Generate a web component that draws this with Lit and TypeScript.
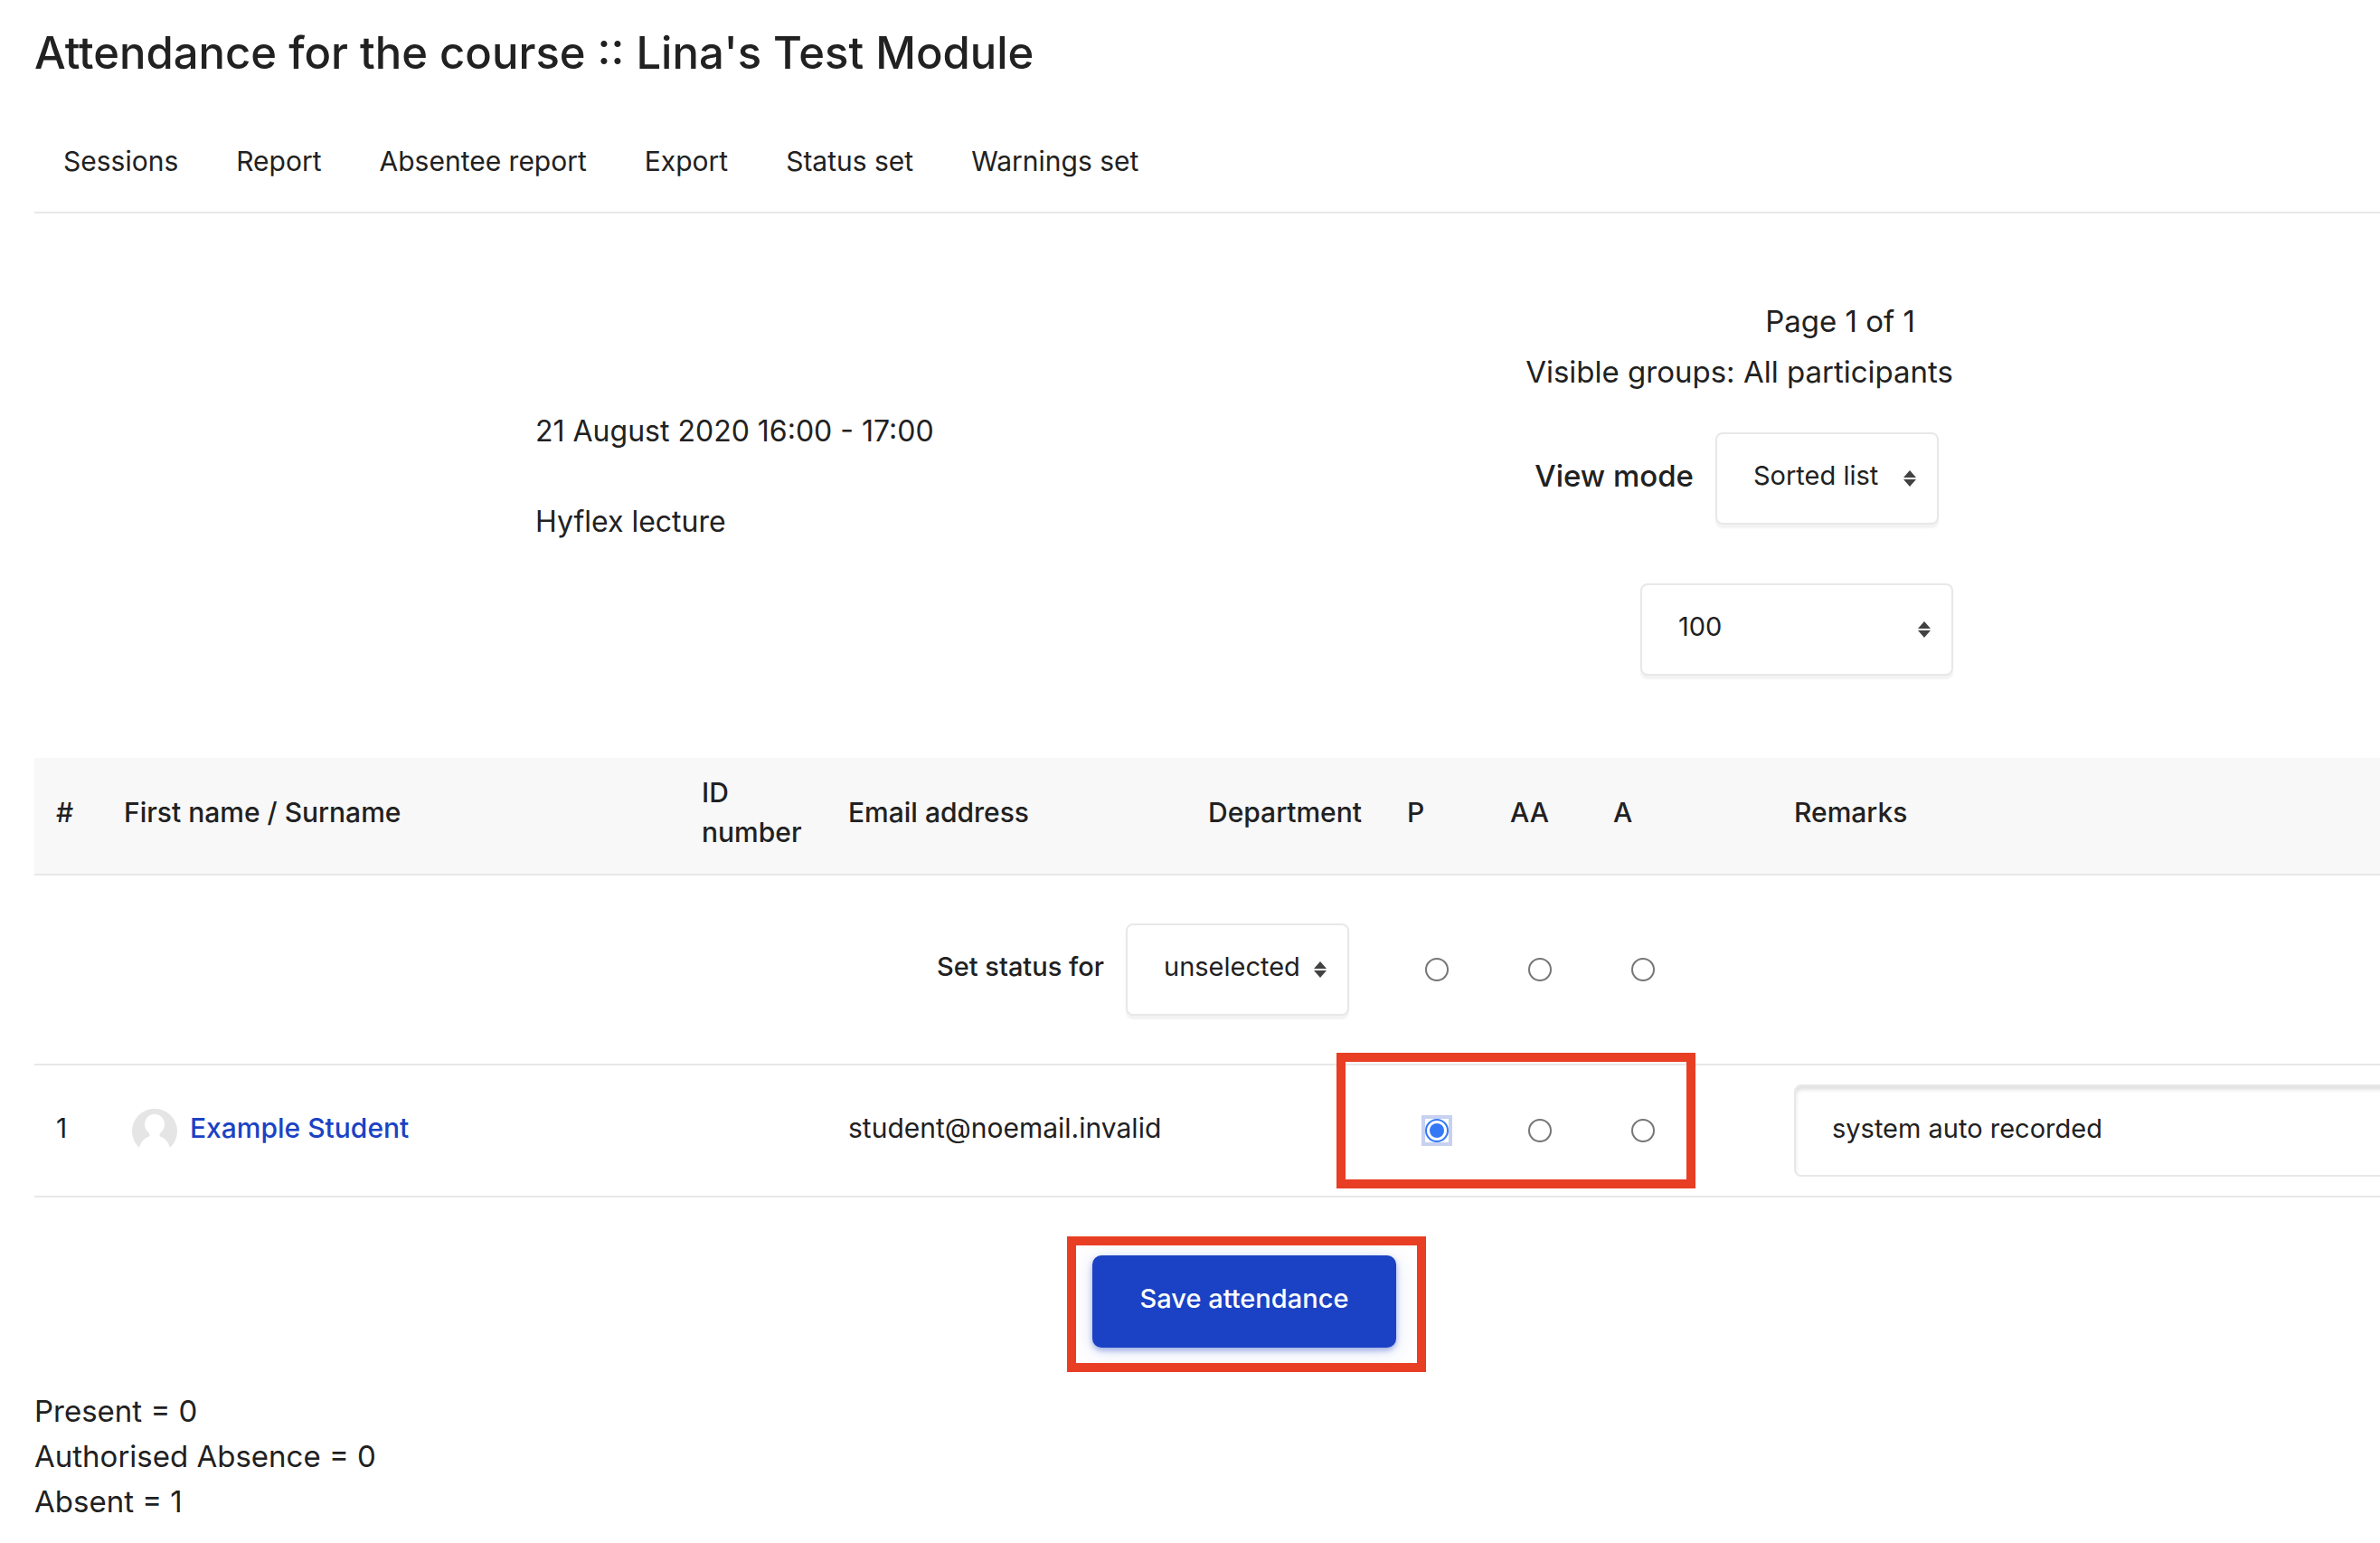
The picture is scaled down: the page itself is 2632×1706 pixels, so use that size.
import { LitElement, html, css, svg } from "lit";
import { customElement, state } from "lit/decorators.js";

const TABS = ["Sessions", "Report", "Absentee report", "Export", "Status set", "Warnings set"];
const STATUSES = [
  { code: "P", label: "Present", count: 0 },
  { code: "AA", label: "Authorised Absence", count: 0 },
  { code: "A", label: "Absent", count: 1 },
];

const sorter = html`<svg class="sorter" width="14" height="18" viewBox="0 0 14 18" aria-hidden="true">
  ${svg`<path d="M0 8 7 0l7 8z" fill="#424242"></path>
  <path d="M0 10h14l-7 8z" fill="#424242"></path>`}
</svg>`;

@customElement("app-root")
export class AppRoot extends LitElement {
  static styles = css`
    :host {
      display: block;
      overflow: hidden;
      background: #fff;
      color: #212121;
      font-family: Inter, "Open Sans", sans-serif;
      font-size: 33px;
      line-height: 50px;
    }
    * {
      box-sizing: border-box;
    }
    .page {
      margin: 0 -82px 0 38px;
      padding: 30px 0 20px;
    }
    .title {
      margin: 0;
      font-size: 49px;
      font-weight: 500;
      line-height: 58px;
    }
    .tabs {
      display: flex;
      gap: 64px;
      margin: 68px 0 0;
      padding: 0 32px 34px;
      list-style: none;
      border-bottom: 2px solid #e8e8e8;
      font-size: 30px;
      line-height: 44px;
    }
    .tab {
      color: inherit;
      text-decoration: none;
    }
    .overview {
      display: grid;
      grid-template-columns: 554fr 1568fr 554fr;
      padding: 94px 0 91px;
    }
    .overview-body {
      grid-column: 2;
      display: flex;
      justify-content: space-between;
      align-items: center;
    }
    .session {
      display: flex;
      flex-direction: column;
      gap: 50px;
      padding-bottom: 24px;
      font-size: 32px;
    }
    .line {
      margin: 0;
    }
    .controls {
      display: flex;
      flex-direction: column;
      align-items: flex-end;
    }
    .paging {
      padding-right: 42px;
    }
    .groups {
      padding-top: 6px;
    }
    .view-mode {
      display: flex;
      align-items: center;
      gap: 24px;
      padding: 42px 16px 65px 0;
    }
    .label {
      padding-bottom: 6px;
      font-weight: 500;
    }
    .picker {
      display: inline-grid;
      align-items: center;
    }
    .select,
    .sorter {
      grid-area: 1 / 1;
    }
    .sorter {
      justify-self: end;
      margin-right: 25px;
      pointer-events: none;
    }
    .select {
      appearance: none;
      width: 247px;
      height: 102px;
      margin: 0;
      padding: 0 36px 6px 40px;
      border: 2px solid #e8e8e8;
      border-radius: 8px;
      background: #fff;
      box-shadow: 0 4px 2px rgba(0, 0, 0, 0.05);
      color: inherit;
      font: 400 29px/44px Inter, "Open Sans", sans-serif;
    }
    .select.wide {
      width: 346px;
    }
    .roster {
      width: 100%;
      table-layout: fixed;
      border-collapse: separate;
      border-spacing: 0;
      font-size: 30px;
      line-height: 44px;
    }
    .num { width: 75px; }
    .name { width: 639px; }
    .idno { width: 162px; }
    .email { width: 398px; }
    .dept { width: 220px; }
    .mark { width: 114px; }
    .last-mark { width: 200px; }
    .head {
      height: 130px;
      padding: 16px 16px 24px 24px;
      background: #f8f8f8;
      border-bottom: 2px solid #e8e8e8;
      text-align: left;
      font-weight: 500;
    }
    .cell {
      height: 146px;
      padding: 0 0 0 24px;
      border-bottom: 2px solid #e8e8e8;
      vertical-align: middle;
    }
    .bulk .cell {
      height: 210px;
    }
    .cell.text {
      padding-bottom: 6px;
    }
    .bulk-inner {
      display: flex;
      justify-content: flex-end;
      align-items: center;
      gap: 24px;
      padding-right: 40px;
      font-size: 29px;
    }
    .student {
      display: flex;
      align-items: center;
      gap: 14px;
      padding-left: 9px;
    }
    .student-link {
      padding-bottom: 6px;
      color: #1b42c4;
      font-weight: 500;
      text-decoration: none;
    }
    .avatar {
      flex: none;
      display: block;
    }
    .radio {
      appearance: none;
      display: block;
      width: 26px;
      height: 26px;
      margin: 0 0 0 20px;
      padding: 3px;
      border: 2px solid #767676;
      border-radius: 50%;
      background: #fff;
    }
    .radio:checked {
      border-color: #3478f6;
      background: #3478f6 content-box;
    }
    .ring {
      display: block;
      width: 34px;
      margin-left: 16px;
      border: 4px solid #c7d1f0;
    }
    .ring .radio {
      margin: 0;
    }
    .marked {
      position: relative;
    }
    .callout {
      position: absolute;
      border: 10px solid #e83e24;
      pointer-events: none;
    }
    .callout-marks {
      top: -14px;
      left: -54px;
      width: 397px;
      height: 150px;
    }
    .callout-save {
      inset: -21px -33px -27px -28px;
    }
    .remark {
      display: block;
      width: calc(100% - 24px);
      height: 102px;
      padding: 0 40px 6px;
      border: 2px solid #e8e8e8;
      border-radius: 8px;
      background: #fff;
      box-shadow: inset 0 4px 4px rgba(0, 0, 0, 0.12);
      color: inherit;
      font: 400 29px/44px Inter, "Open Sans", sans-serif;
    }
    .actions {
      display: flex;
      justify-content: center;
      padding: 64px 0 45px;
    }
    .save-wrap {
      position: relative;
    }
    .save {
      display: block;
      min-width: 336px;
      height: 102px;
      padding: 0 48px 6px;
      border: 0;
      border-radius: 10px;
      background: #1b42c4;
      box-shadow: 0 3px 6px rgba(27, 66, 196, 0.4), 0 4px 24px rgba(27, 66, 196, 0.14);
      color: #fff;
      font: 500 29px/44px Inter, "Open Sans", sans-serif;
    }
  `;

  @state() private mark = "P";

  render() {
    return html`
      <main class="page">
        <h1 class="title">Attendance for the course :: Lina's Test Module</h1>
        <nav>
          <ul class="tabs">
            ${TABS.map((t) => html`<li><a class="tab" href="#">${t}</a></li>`)}
          </ul>
        </nav>

        <section class="overview">
          <div class="overview-body">
            <div class="session">
              <p class="line">21 August 2020 16:00 - 17:00</p>
              <p class="line">Hyflex lecture</p>
            </div>
            <div class="controls">
              <p class="line paging">Page 1 of 1</p>
              <p class="line groups">Visible groups: All participants</p>
              <div class="view-mode">
                <label class="label" for="view">View mode</label>
                <span class="picker">
                  <select class="select" id="view"><option>Sorted list</option></select>${sorter}
                </span>
              </div>
              <span class="picker">
                <select class="select wide" aria-label="Per page"><option>100</option></select>${sorter}
              </span>
            </div>
          </div>
        </section>

        <table class="roster">
          <thead>
            <tr>
              <th class="head num" scope="col">#</th>
              <th class="head name" scope="col">First name / Surname</th>
              <th class="head idno" scope="col">ID number</th>
              <th class="head email" scope="col">Email address</th>
              <th class="head dept" scope="col">Department</th>
              <th class="head mark" scope="col">P</th>
              <th class="head mark" scope="col">AA</th>
              <th class="head last-mark" scope="col">A</th>
              <th class="head" scope="col">Remarks</th>
            </tr>
          </thead>
          <tbody>
            <tr class="bulk">
              <td class="cell" colspan="5">
                <div class="bulk-inner">
                  <label class="label" for="scope">Set status for</label>
                  <span class="picker">
                    <select class="select" id="scope"><option>unselected</option></select>${sorter}
                  </span>
                </div>
              </td>
              ${STATUSES.map(
                (s) => html`<td class="cell">
                  <input class="radio" type="radio" name="all" aria-label="Set all ${s.label}"
                    @change=${() => (this.mark = s.code)} />
                </td>`
              )}
              <td class="cell"></td>
            </tr>
            <tr>
              <td class="cell text">1</td>
              <td class="cell">
                <div class="student">
                  <svg class="avatar" width="50" height="50" viewBox="0 0 50 50" aria-hidden="true">
                    <path fill="#e5e5e5" d="M8 44A25 25 0 1 1 42 44C40 37 36 33 31 31.500C30 30 30.500 28.500 32 27A11 11.500 0 1 0 18 27C19.500 28.500 20 30 19 31.500C14 33 10 37 8 44Z"></path>
                  </svg>
                  <a class="student-link" href="#">Example Student</a>
                </div>
              </td>
              <td class="cell"></td>
              <td class="cell text">student@noemail.invalid</td>
              <td class="cell"></td>
              ${STATUSES.map((s, i) => {
                const on = this.mark === s.code;
                return html`<td class="cell ${i === 0 ? "marked" : ""}">
                  <span class=${on ? "ring" : ""}>
                    <input class="radio" type="radio" name="student-1" aria-label=${s.label}
                      .checked=${on} @change=${() => (this.mark = s.code)} />
                  </span>
                  ${i === 0 ? html`<span class="callout callout-marks"></span>` : ""}
                </td>`;
              })}
              <td class="cell">
                <input class="remark" type="text" aria-label="Remarks" value="system auto recorded" />
              </td>
            </tr>
          </tbody>
        </table>

        <div class="actions">
          <div class="save-wrap">
            <button class="save" type="button">Save attendance</button>
            <span class="callout callout-save"></span>
          </div>
        </div>

        <div>
          ${STATUSES.map((s) => html`<p class="line">${s.label} = ${s.count}</p>`)}
        </div>
      </main>
    `;
  }
}
